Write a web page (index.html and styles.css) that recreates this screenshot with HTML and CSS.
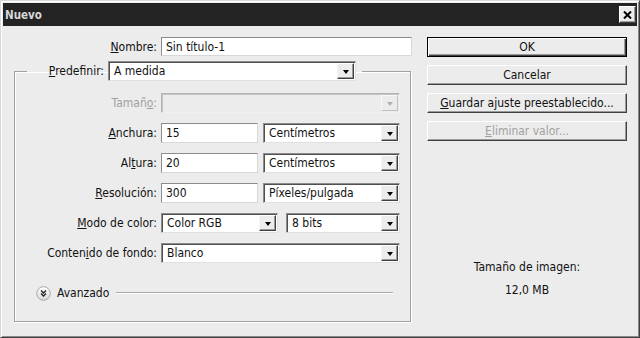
FILE: index.html
```html
<!DOCTYPE html>
<html>
<head>
<meta charset="utf-8">
<link rel="stylesheet" href="styles.css">
</head>
<body>
<div class="win">
  <div class="titlebar">
    <span class="title">Nuevo</span>
    <div class="close"><svg width="9" height="8" viewBox="0 0 9 8"><path d="M1 0.5 L8 7.5 M8 0.5 L1 7.5" stroke="#000" stroke-width="2"/></svg></div>
  </div>
  <div class="body">
    <div class="left">
      <div class="row name-row">
        <span class="lbl"><u>N</u>ombre:</span>
        <div class="input w-name">Sin título-1</div>
      </div>
      <fieldset class="group">
        <legend class="legend">
          <span class="lbl lbl-pre"><u>P</u>redefinir:</span>
          <div class="select w-pre"><span class="val">A medida</span><span class="arrow"><i class="tri"></i></span></div>
        </legend>
        <div class="row first">
          <span class="lbl dis">Tamañ<u>o</u>:</span>
          <div class="select disabled w-full"><span class="val"></span><span class="arrow"><i class="tri"></i></span></div>
        </div>
        <div class="row">
          <span class="lbl"><u>A</u>nchura:</span>
          <div class="input w-num">15</div>
          <div class="select w-unit"><span class="val">Centímetros</span><span class="arrow"><i class="tri"></i></span></div>
        </div>
        <div class="row">
          <span class="lbl">Al<u>t</u>ura:</span>
          <div class="input w-num">20</div>
          <div class="select w-unit"><span class="val">Centímetros</span><span class="arrow"><i class="tri"></i></span></div>
        </div>
        <div class="row">
          <span class="lbl"><u>R</u>esolución:</span>
          <div class="input w-num">300</div>
          <div class="select w-unit"><span class="val">Píxeles/pulgada</span><span class="arrow"><i class="tri"></i></span></div>
        </div>
        <div class="row">
          <span class="lbl"><u>M</u>odo de color:</span>
          <div class="select w-mode"><span class="val">Color RGB</span><span class="arrow"><i class="tri"></i></span></div>
          <div class="select w-bits"><span class="val">8 bits</span><span class="arrow"><i class="tri"></i></span></div>
        </div>
        <div class="row">
          <span class="lbl">Conten<u>i</u>do de fondo:</span>
          <div class="select w-full"><span class="val">Blanco</span><span class="arrow"><i class="tri"></i></span></div>
        </div>
        <div class="adv">
          <svg class="adv-icon" width="15" height="15" viewBox="0 0 15 15">
            <defs><linearGradient id="g" x1="0" y1="0" x2="0" y2="1"><stop offset="0" stop-color="#ffffff"/><stop offset="1" stop-color="#d8d8d8"/></linearGradient></defs>
            <circle cx="7.5" cy="7.5" r="6.8" fill="url(#g)" stroke="#a8a8a8" stroke-width="1"/>
            <path d="M5 4.5 L7.5 7 L10 4.5 M5 7.5 L7.5 10 L10 7.5" fill="none" stroke="#202020" stroke-width="1.3"/>
          </svg>
          <span class="adv-text">Avanzado</span>
          <span class="adv-line"></span>
        </div>
      </fieldset>
    </div>
    <div class="right">
      <div class="btn default">OK</div>
      <div class="btn">Cancelar</div>
      <div class="btn"><u>G</u>uardar ajuste preestablecido...</div>
      <div class="btn dis"><u>E</u>liminar valor...</div>
      <div class="info">Tamaño de imagen:</div>
      <div class="info second">12,0 MB</div>
    </div>
  </div>
</div>
</body>
</html>
```
FILE: styles.css
```css
* { box-sizing: border-box; }
html, body { margin: 0; padding: 0; background: #ececec; }
body {
  font-family: "DejaVu Sans Condensed", "DejaVu Sans", sans-serif;
  font-size: 12px;
  color: #111;
}
.win {
  width: 640px;
  height: 338px;
  border: 1px solid;
  border-color: #d8d8d8 #404040 #404040 #d8d8d8;
  box-shadow: inset 1px 1px #ffffff, inset -1px -1px #8a8a8a;
  padding: 2px;
  background: #ececec;
  display: flex;
  flex-direction: column;
}
.titlebar {
  height: 23px;
  background: #232323;
  display: flex;
  align-items: center;
  justify-content: space-between;
  padding: 0 1px 0 2px;
}
.title {
  color: #d8d8d8;
  font-weight: bold;
  font-size: 11.5px;
}
.close {
  width: 17px;
  height: 17px;
  background: #ececec;
  border: 1px solid;
  border-color: #ffffff #404040 #404040 #ffffff;
  box-shadow: inset -1px -1px #9a9a9a;
  display: flex;
  align-items: center;
  justify-content: center;
}
.body {
  flex: 1;
  display: flex;
  padding-top: 11px;
}
.left { width: 424px; }
.right {
  width: 200px;
  display: flex;
  flex-direction: column;
  gap: 8px;
}
.row {
  display: flex;
  align-items: center;
  height: 20px;
  margin-top: 10px;
}
.row.first { margin-top: 12px; }
.name-row { margin-top: 0; height: 19px; }
.lbl {
  text-align: right;
  white-space: nowrap;
  width: 142px;
  margin-right: 4px;
}
.name-row .lbl { width: 154px; }
.lbl-pre { width: 77px; display: inline-block; }
.dis { color: #a0a0a0; }
u { text-decoration: underline; text-underline-offset: 1px; }

.input {
  height: 100%;
  background: #fff;
  border: 1px solid;
  border-color: #8c8c8c #d8d8d8 #d8d8d8 #8c8c8c;
  padding-left: 4px;
  display: flex;
  align-items: center;
  white-space: nowrap;
}
.w-name { width: 251px; }
.w-num { width: 97px; margin-right: 5px; }
.select {
  height: 20px;
  background: #fff;
  border: 1px solid;
  border-color: #8c8c8c #e0e0e0 #e0e0e0 #8c8c8c;
  box-shadow: inset 1px 1px #505050;
  display: flex;
  align-items: center;
  padding: 1px;
}
.select .val {
  flex: 1;
  padding-left: 4px;
  white-space: nowrap;
}
.arrow {
  width: 17px;
  height: 100%;
  background: #ececec;
  border: 1px solid;
  border-color: #ffffff #404040 #404040 #f4f4f4;
  box-shadow: inset -1px -1px #9a9a9a;
  display: flex;
  align-items: center;
  justify-content: center;
}
.tri {
  width: 0; height: 0;
  border-left: 3.5px solid transparent;
  border-right: 3.5px solid transparent;
  border-top: 4px solid #000;
  margin-top: 1px;
}
.select.disabled {
  background: #ececec;
  border-color: #b4b4b4 #f0f0f0 #f0f0f0 #b4b4b4;
  box-shadow: inset 1px 1px #c4c4c4;
}
.select.disabled .arrow {
  border-color: #f8f8f8 #c0c0c0 #c0c0c0 #f8f8f8;
  box-shadow: none;
}
.select.disabled .tri { border-top-color: #b0b0b0; }
.w-pre { width: 248px; }
.w-unit { width: 137px; }
.w-full { width: 239px; }
.w-mode { width: 117px; margin-right: 8px; }
.w-bits { width: 114px; }

.group {
  margin: 5px 0 0 11px;
  width: 397px;
  padding: 0 0 20px 0;
  border: 1px solid #a0a0a0;
  box-shadow: inset 1px 1px #fff, 1px 1px #fff;
}
.legend {
  margin-left: 12px;
  padding: 0 6px 0 0;
  display: flex;
  align-items: center;
  height: 20px;
}
.adv {
  margin-top: 22px;
  height: 16px;
  display: flex;
  align-items: center;
  padding-left: 21px;
  padding-right: 17px;
}
.adv-icon { display: block; }
.adv-text { margin-left: 6px; margin-right: 7px; }
.adv-line {
  flex: 1;
  height: 2px;
  border-top: 1px solid #a8a8a8;
  border-bottom: 1px solid #ffffff;
}

.btn {
  height: 20px;
  border: 1px solid;
  border-color: #ffffff #404040 #404040 #ffffff;
  box-shadow: inset -1px -1px #9a9a9a;
  display: flex;
  align-items: center;
  justify-content: center;
  white-space: nowrap;
}
.btn.default {
  border: 1px solid #000;
  box-shadow: inset 1px 1px #fff, inset -1px -1px #404040, inset -2px -2px #9a9a9a;
}
.btn.dis { color: #a0a0a0; }
.info {
  text-align: center;
  margin-top: 111px;
  height: 14px;
  line-height: 14px;
}
.info.second { margin-top: 1px; }
```
